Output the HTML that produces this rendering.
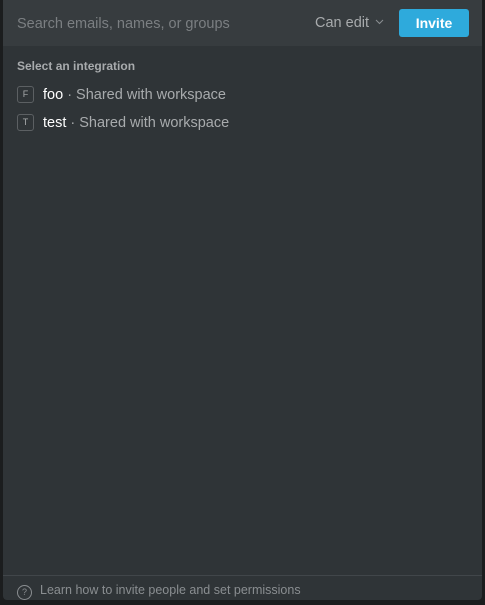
<!DOCTYPE html><html><head><style>
body{margin:0;width:485px;height:605px;background:#1b1d1e;font-family:"Liberation Sans",sans-serif;overflow:hidden;position:relative}
.p{position:absolute;left:3px;top:0;width:479px;height:600px;background:#2f3437;border-radius:0 0 4px 4px}
.h{position:absolute;left:0;top:0;width:479px;height:46px;background:#373c3f}
.s{position:absolute;left:14px;top:16px;font-size:14.5px;color:#7b7f82}
.c{position:absolute;left:312px;top:15px;font-size:14.5px;color:#a8abad}
.b{position:absolute;left:396px;top:9px;width:70px;height:28px;background:#2eaadc;border-radius:3px;color:#fff;font-size:14px;font-weight:bold;text-align:center;line-height:28px}
.t{position:absolute;left:14px;top:59px;font-size:12px;font-weight:bold;color:#a8abad}
.r{position:absolute;left:14px;font-size:14.5px;color:#a8abad;height:18px;line-height:18px}
.r b{color:#fff;font-weight:normal}
.i{position:absolute;left:0;top:0;width:15px;height:15px;border:1px solid #5c6063;border-radius:3px;font-size:9px;line-height:15px;text-align:center;color:#a8abad}
.r span.x{margin-left:26px}
.f{position:absolute;left:0;top:575px;width:479px;border-top:1px solid #41464a}
.fl{position:absolute;left:14px;top:583px;font-size:12.5px;color:#8a8e91}
.q{display:inline-block;width:13px;height:13px;border:1px solid #8a8e91;border-radius:50%;font-size:9px;text-align:center;line-height:13px;margin-right:8px;vertical-align:-1px}
</style></head><body><div class="p">
<div class="h"><div class="s">Search emails, names, or groups</div><div class="c">Can edit <svg width="9" height="6" style="vertical-align:2px;margin-left:2px"><path d="M1 1l3.5 3.5L8 1" stroke="#8a8e91" fill="none"/></svg></div><div class="b">Invite</div></div>
<div class="t">Select an integration</div>
<div class="r" style="top:86px"><span class="i">F</span><span class="x"><b>foo</b> · Shared with workspace</span></div>
<div class="r" style="top:114px"><span class="i">T</span><span class="x"><b>test</b> · Shared with workspace</span></div>
<div class="f"></div>
<div class="fl"><span class="q">?</span>Learn how to invite people and set permissions</div>
</div></body></html>
